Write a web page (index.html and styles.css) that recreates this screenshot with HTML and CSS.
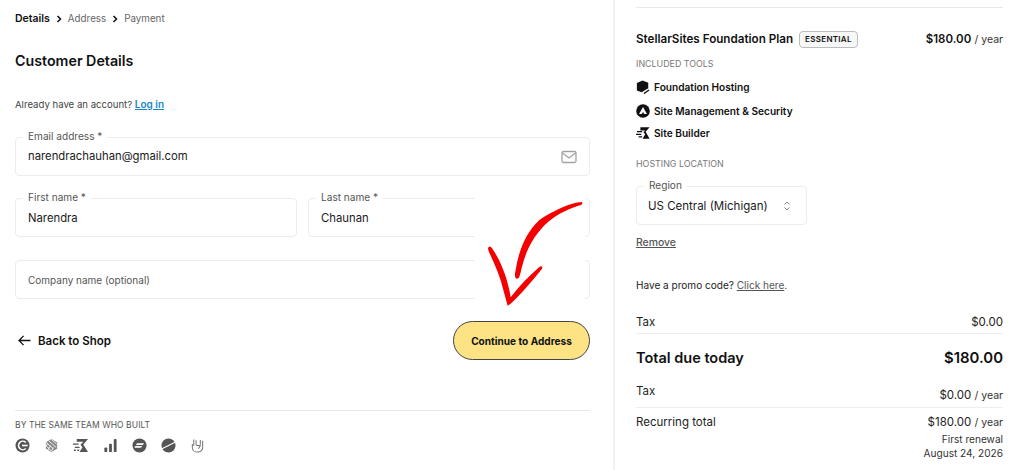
FILE: index.html
```html
<!DOCTYPE html>
<html lang="en">
<head>
<meta charset="utf-8">
<title>Customer Details</title>
<link rel="stylesheet" href="styles.css">
</head>
<body>
<div class="page">
  <main class="left">
    <nav class="crumbs">
      <span class="crumb-on">Details</span>
      <svg class="chev" viewBox="0 0 6 8"><path d="M1.5 1l3 3-3 3" fill="none" stroke="#111" stroke-width="1.5"/></svg>
      <span>Address</span>
      <svg class="chev" viewBox="0 0 6 8"><path d="M1.5 1l3 3-3 3" fill="none" stroke="#111" stroke-width="1.5"/></svg>
      <span>Payment</span>
    </nav>
    <h1 class="title">Customer Details</h1>
    <p class="account">Already have an account? <a class="login" href="#">Log in</a></p>
    <div class="field field-email">
      <span class="flabel">Email address *</span>
      <span class="fvalue">narendrachauhan@gmail.com</span>
      <svg class="mail" viewBox="0 0 16 14"><rect x="1" y="1.5" width="14" height="11" rx="1.5" fill="none" stroke="#a3a3a3" stroke-width="1.3"/><path d="M1.5 3l6.5 5 6.5-5" fill="none" stroke="#a3a3a3" stroke-width="1.3"/></svg>
    </div>
    <div class="name-row">
      <div class="field"><span class="flabel">First name *</span><span class="fvalue">Narendra</span></div>
      <div class="field"><span class="flabel">Last name *</span><span class="fvalue">Chaunan</span></div>
    </div>
    <div class="field field-company"><span class="placeholder">Company name (optional)</span></div>
    <div class="actions">
      <a class="back" href="#">
        <svg class="back-arrow" viewBox="0 0 14 12"><path d="M13.5 6H1M6 1L1 6l5 5" fill="none" stroke="#111" stroke-width="1.4"/></svg>
        Back to Shop
      </a>
      <button class="continue">Continue to Address</button>
    </div>
    <footer class="built">
      <div class="built-title">BY THE SAME TEAM WHO BUILT</div>
      <div class="built-icons">
        <svg viewBox="0 0 16 16"><circle cx="8" cy="8" r="7.500" fill="#555"/><path d="M11.500 4.800A4.500 4.500 0 1 0 11.500 11.200" fill="none" stroke="#fff" stroke-width="1.700"/><path d="M7.500 8h6" stroke="#fff" stroke-width="1.700"/></svg>
        <svg viewBox="0 0 16 16"><path d="M8 1l6 3.500v7L8 15l-6-3.500v-7z" fill="#888"/><path d="M2 4.500l8 7M5 3l8 7M8 1.500l5.500 5M2 8l6 6M4 5.500L2 9M7 8l-3 5M10 10l-2 4" stroke="#fff" stroke-width=".9"/></svg>
        <svg class="icon-wide" viewBox="0 0 18 16"><path d="M5 1h12l-5 6 5 8H8l3-5-2-3 3-3H5z" fill="#555"/><path d="M1 6.500h6M3 10h5M2 13h2M5.500 13h2" stroke="#555" stroke-width="1.500"/></svg>
        <svg viewBox="0 0 16 16"><rect x="1.500" y="10" width="3" height="5" rx="1" fill="#555"/><rect x="6.500" y="6" width="3" height="9" rx="1" fill="#555"/><rect x="11.500" y="1" width="3" height="14" rx="1" fill="#555"/></svg>
        <svg viewBox="0 0 16 16"><circle cx="8" cy="8" r="7.500" fill="#555"/><path d="M5.500 5.500h7.500l-1.500 2H4zM3.500 8.500h7.500L9.500 10.500H2.500z" fill="#fff"/></svg>
        <svg viewBox="0 0 16 16"><circle cx="8" cy="8" r="7.500" fill="#555"/><path d="M1 11.500L15 4.500" stroke="#fff" stroke-width="1.200"/></svg>
        <svg viewBox="0 0 16 16"><path d="M4 1.500v7M6.500 2.500v5M11 2v5M13.500 3v7c0 3-2.500 5-5.500 5s-5.500-2-5.500-5V6.500M6.500 8h4.500L9 11.500" fill="none" stroke="#777" stroke-width="1.100"/></svg>
      </div>
    </footer>
    <div class="arrow-patch">
      <svg viewBox="15 0 330 348"><path d="M335 36C300 38 250 62 208 90 168 128 146 180 136 245 132 262 138 270 145 265 150 260 152 245 156 230 170 175 195 130 235 95 265 70 300 55 333 45 338 42 338 37 335 36Z" fill="#f50000"/><path d="M58 170C52 172 54 180 58 188 75 225 92 262 100 300L113 347 120 343C150 315 185 275 216 236 219 231 214 226 208 231 180 255 150 285 122 322 115 275 95 215 66 175 63 171 60 169 58 170Z" fill="#f50000"/></svg>
    </div>
  </main>
  <aside class="right">
    <div class="plan">
      <div class="plan-name"><strong>StellarSites Foundation Plan</strong><span class="badge">ESSENTIAL</span></div>
      <div class="price"><strong>$180.00</strong> <span class="per">/ year</span></div>
    </div>
    <div class="section-label tools-label">INCLUDED TOOLS</div>
    <ul class="tools">
      <li class="tool"><svg viewBox="0 0 16 16"><path d="M7.500 0.500l6.500 2.500v6.500L6.500 14 1 12V3.500z" fill="#111"/><path d="M9 15.500l6-4" stroke="#111" stroke-width="1.500"/></svg>Foundation Hosting</li>
      <li class="tool tool-2"><svg viewBox="0 0 16 16"><circle cx="8" cy="8" r="7.800" fill="#111"/><path d="M8 3.500l4.500 8H3.500z" fill="#fff"/><path d="M6.500 11.500L8 9l1.500 2.500z" fill="#111"/></svg>Site Management &amp; Security</li>
      <li class="tool tool-3"><svg viewBox="0 0 16 16"><path d="M5 1.500h10.500l-4.500 5 4.500 8H7.500l3-5-2-2.500 2-2H5z" fill="#111"/><path d="M1 6.500h6M0 9.500h6M3 12.500h4" stroke="#111" stroke-width="1.300"/></svg>Site Builder</li>
    </ul>
    <div class="section-label host-label">HOSTING LOCATION</div>
    <div class="field field-region">
      <span class="flabel">Region</span>
      <span class="fvalue">US Central (Michigan)</span>
      <svg class="updown" viewBox="0 0 8 12"><path d="M1.500 4.500L4 2l2.500 2.500M1.500 7.500L4 10l2.500-2.500" fill="none" stroke="#888" stroke-width="1"/></svg>
    </div>
    <a class="remove" href="#">Remove</a>
    <p class="promo">Have a promo code? <a class="promo-link" href="#">Click here</a>.</p>
    <div class="line line-tax"><span>Tax</span><span>$0.00</span></div>
    <div class="line line-total"><span>Total due today</span><span>$180.00</span></div>
    <div class="line line-tax2"><span>Tax</span><span class="tax2-value">$0.00 <span class="per">/ year</span></span></div>
    <div class="line line-rec"><span>Recurring total</span><span>$180.00 <span class="per">/ year</span></span></div>
    <div class="renewal">First renewal<br>August 24, 2026</div>
  </aside>
</div>
</body>
</html>
```
FILE: styles.css
```css
* { box-sizing: border-box; }
html, body { margin: 0; padding: 0; }
body {
  width: 1024px;
  height: 470px;
  overflow: hidden;
  background: #fff;
  color: #111;
  font-family: Inter, "Liberation Sans", sans-serif;
  font-size: 12.5px;
}
.page { display: flex; height: 470px; }
.left {
  position: relative;
  width: 615px;
  padding: 13px 23px 0 15px;
  border-right: 2px solid #f1f1f1;
}
.crumbs { display: flex; align-items: center; height: 12px; font-size: 9.800px; color: #666; line-height: 12px; }
.crumb-on { color: #111; font-weight: 600; font-size: 10.500px; }
.chev { width: 6px; height: 8px; margin: 0 6px; }
.title { margin: 27px 0 0; font-size: 14.250px; line-height: 18px; font-weight: 600; color: #111; }
.account { margin: 27px 0 0; font-size: 9.600px; line-height: 14px; color: #444; }
.login { color: #1687c9; font-size: 10px; font-weight: 600; text-decoration: underline; }
.field {
  position: relative;
  display: flex;
  align-items: center;
  height: 39px;
  padding: 0 12px;
  border: 1px solid #ececec;
  border-radius: 4px;
}
.field-email { margin-top: 25px; padding-bottom: 1px; }
.flabel {
  position: absolute;
  left: 7px;
  top: -8px;
  padding: 0 5px;
  background: #fff;
  font-size: 10.100px;
  line-height: 13px;
  color: #555;
}
.fvalue { font-size: 11.300px; color: #1a1a1a; }
.mail { position: absolute; right: 12px; top: 12px; width: 16px; height: 14px; }
.name-row { display: flex; gap: 11px; margin-top: 22px; }
.name-row .field { flex: 1; }
.field-company { margin-top: 23px; }
.placeholder { font-size: 10px; color: #555; }
.actions { display: flex; justify-content: space-between; align-items: center; margin-top: 22px; }
.back { display: flex; align-items: center; gap: 7px; padding-left: 3px; color: #111; font-size: 11.500px; font-weight: 600; text-decoration: none; }
.back-arrow { width: 13px; height: 11px; }
.continue {
  width: 137px;
  height: 39px;
  padding: 0;
  background: #fde383;
  border: 1px solid #444;
  border-radius: 20px;
  color: #111;
  font-family: inherit;
  font-size: 10.100px;
  font-weight: 700;
}
.built { margin-top: 50px; padding-top: 9px; border-top: 1px solid #e8e8e8; }
.built-title { font-size: 8.500px; line-height: 11px; color: #555; letter-spacing: .07px; }
.built-icons { display: flex; gap: 14px; margin-top: 7px; align-items: center; }
.built-icons svg { width: 15px; height: 15px; }
.built-icons .icon-wide { width: 17px; height: 15px; margin-left: -1px; }
.arrow-patch {
  position: absolute;
  left: 475px;
  top: 190px;
  width: 110px;
  height: 116px;
  background: #fff;
}
.arrow-patch svg { display: block; width: 110px; height: 116px; }
.right { flex: 1; padding: 7px 21px 0 21px; }
.plan {
  display: flex;
  justify-content: space-between;
  align-items: center;
  border-top: 1px solid #e8e8e8;
  padding-top: 22px;
  height: 41px;
  font-size: 11.500px;
}
.plan-name { display: flex; align-items: center; gap: 6px; }
.plan-name strong { font-size: 11.650px; font-weight: 600; color: #111; }
.price strong { font-weight: 600; color: #111; }
.badge {
  padding: 0 5px;
  height: 17px;
  line-height: 15px;
  border: 1px solid #bbb;
  border-radius: 4px;
  background: #f7f7f7;
  font-size: 8px;
  font-weight: 600;
  letter-spacing: .3px;
}
.per { font-weight: 400; font-size: 10.500px; color: #333; }
.section-label { font-size: 8.900px; line-height: 11px; color: #777; }
.tools-label { margin-top: 10px; }
.tools { list-style: none; margin: 10px 0 0; padding: 0; }
.tool { display: flex; align-items: center; gap: 4px; height: 16px; font-size: 10.150px; font-weight: 600; color: #111; }
.tool svg { width: 14px; height: 14px; }
.tool-2 { margin-top: 8px; }
.tool-3 { margin-top: 6px; }
.host-label { margin-top: 17px; }
.field-region { width: 171px; margin-top: 17px; }
.field-region .fvalue { margin-left: -1px; font-size: 11.500px; }
.updown { position: absolute; right: 15px; top: 13px; width: 8px; height: 12px; }
.remove { display: block; margin-top: 11px; font-size: 10.400px; line-height: 13px; font-weight: 500; color: #555; text-decoration: underline; }
.promo { margin: 29px 0 0; font-size: 10.050px; line-height: 14px; color: #222; }
.promo-link { color: #555; text-decoration: underline; }
.line { display: flex; justify-content: space-between; font-size: 11.500px; color: #222; }
.line-tax { margin-top: 23px; padding-bottom: 4px; border-bottom: 1px solid #eee; line-height: 14px; }
.line-total { margin-top: 15px; font-size: 14.500px; font-weight: 600; line-height: 18px; color: #111; }
.line-total span:last-child { font-size: 14.900px; }
.line-tax2 { margin-top: 17px; padding-bottom: 8px; border-bottom: 1px solid #eee; line-height: 14px; }
.tax2-value { position: relative; top: 4px; }
.line-rec { margin-top: 7px; line-height: 14px; }
.renewal { margin-top: 2px; text-align: right; font-size: 10.100px; line-height: 14px; color: #333; }
```
